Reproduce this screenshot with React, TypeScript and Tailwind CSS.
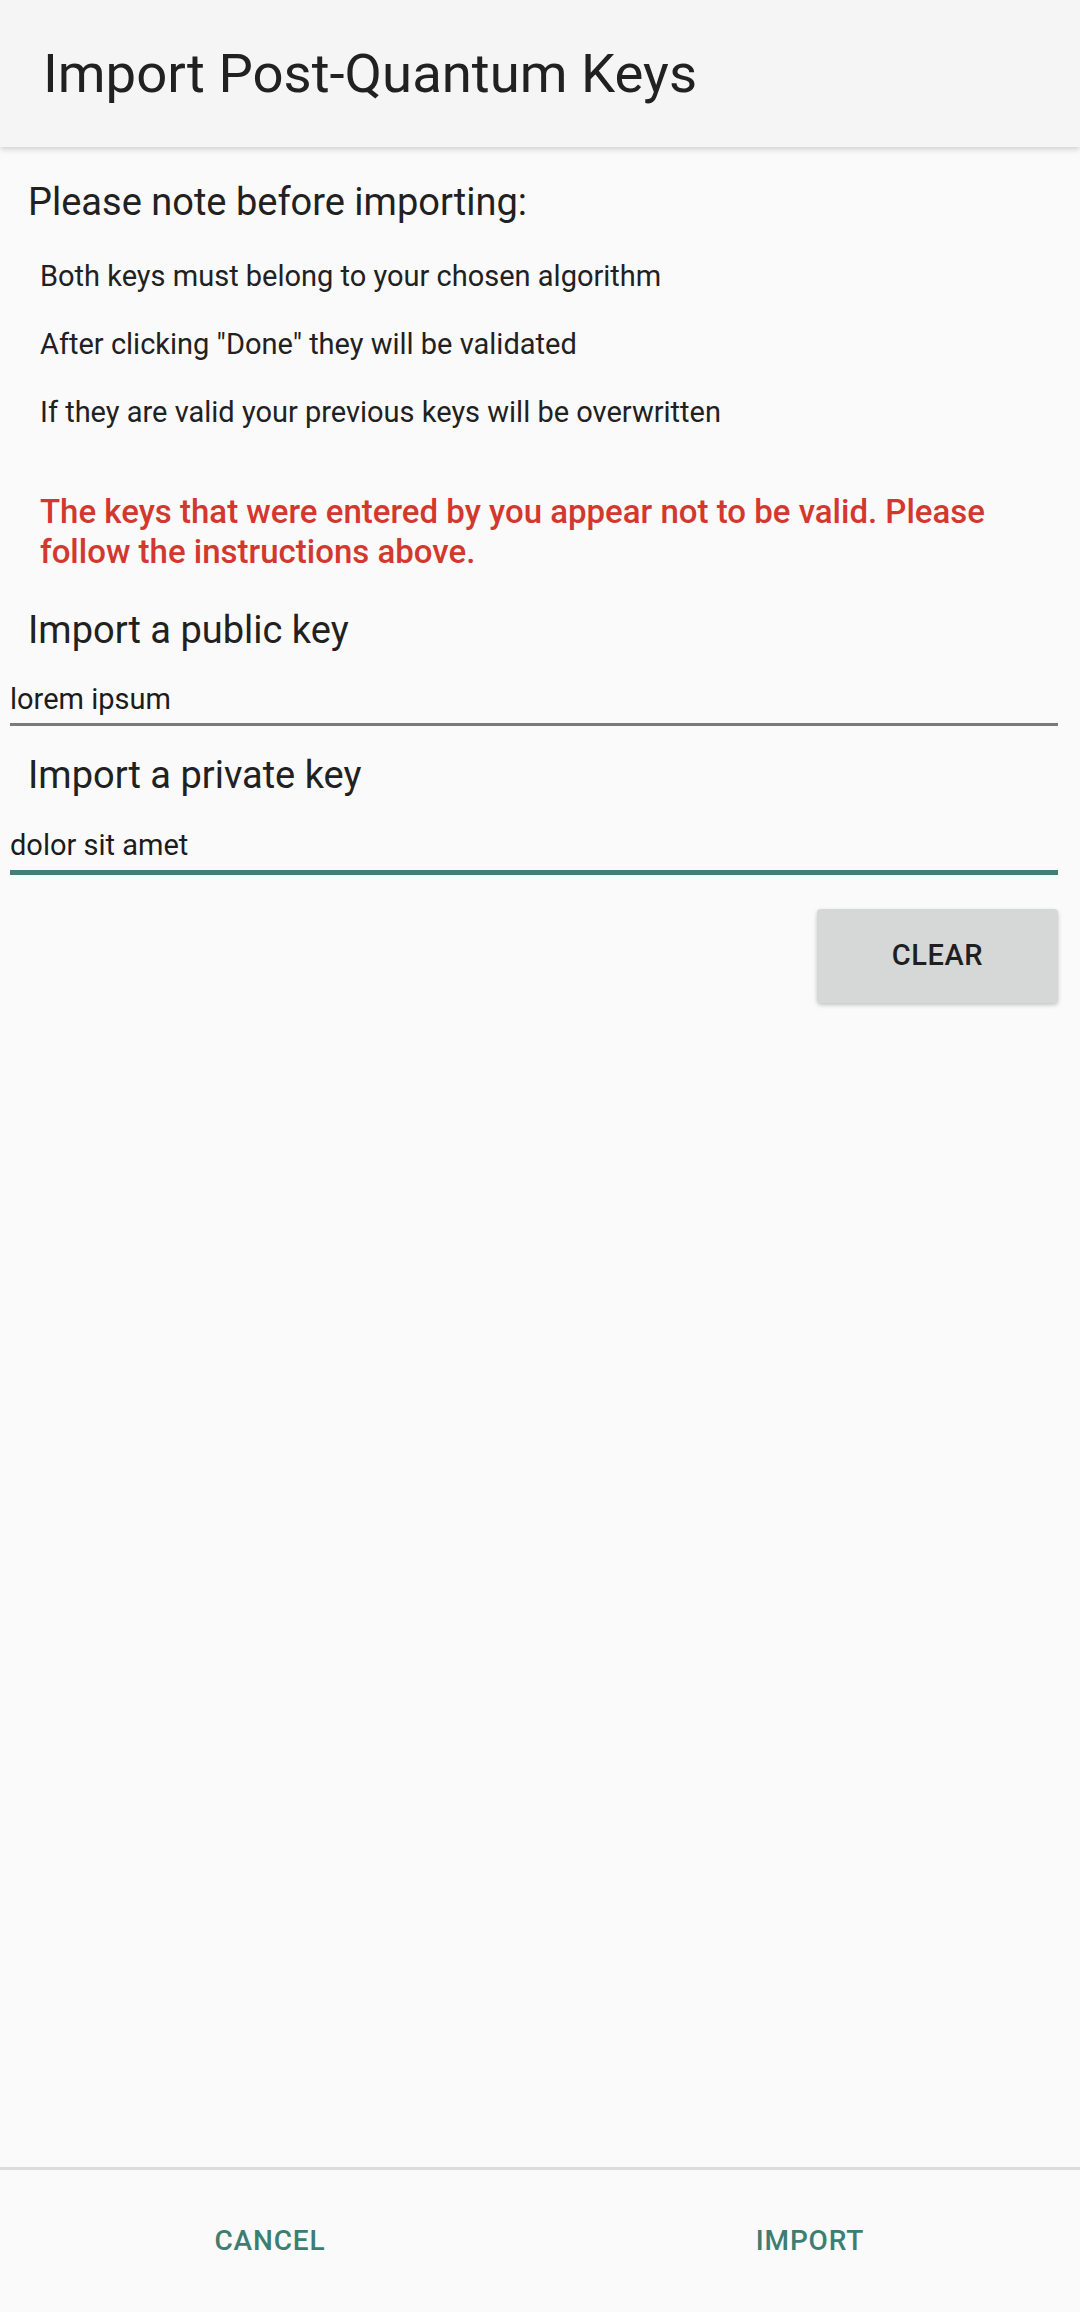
import { useState } from "react";

const notes = [
  "Both keys must belong to your chosen algorithm",
  'After clicking "Done" they will be validated',
  "If they are valid your previous keys will be overwritten",
];

function KeyInput({
  value,
  focused,
}: {
  value: string;
  focused?: boolean;
}) {
  return (
    <div
      className={
        focused
          ? "ml-[10px] mr-[22px] border-b-[5px] border-[#428076] pb-[5px]"
          : "ml-[10px] mr-[22px] border-b-[3px] border-[#7a7a7a] pb-[4px]"
      }
    >
      <p className="text-[29px] leading-[40px] text-[#1c1c1c]">{value}</p>
    </div>
  );
}

export default function App() {
  const [pub] = useState("lorem ipsum");
  const [priv] = useState("dolor sit amet");

  return (
    <div
      className="flex min-h-screen flex-col bg-[#fafafa]"
      style={{ fontFamily: "Roboto, 'Noto Sans', sans-serif" }}
    >
      <header className="flex h-[147px] items-center bg-[#f5f5f5] pl-[43px] shadow-[0_2px_6px_rgba(0,0,0,0.18)]">
        <h1 className="text-[54.5px] leading-none text-[#212121]">
          Import Post-Quantum Keys
        </h1>
      </header>

      <main className="flex-1">
        <h2 className="mt-[33px] pl-[28px] text-[38px] leading-[44px] text-[#212121]">
          Please note before importing:
        </h2>

        <div className="mt-[32px] flex flex-col gap-[28px] pl-[40px]">
          {notes.map((n) => (
            <p key={n} className="text-[29px] leading-[40px] text-[#212121]">
              {n}
            </p>
          ))}
        </div>

        {/* error shown after a failed validation */}
        <p className="mt-[60px] pl-[40px] pr-[40px] text-[33px] font-medium leading-[40px] text-[#d3382f]">
          The keys that were entered by you appear not to be valid. Please
          follow the instructions above.
        </p>

        <h2 className="mt-[36px] pl-[28px] text-[38px] leading-[44px] text-[#212121]">
          Import a public key
        </h2>
        <div className="mt-[27px]">
          <KeyInput value={pub} />
        </div>

        <h2 className="mt-[27px] pl-[28px] text-[38px] leading-[44px] text-[#212121]">
          Import a private key
        </h2>
        <div className="mt-[28px]">
          <KeyInput value={priv} focused />
        </div>

        <div className="mt-[34px] flex justify-end pr-[22px]">
          <button className="h-[94px] w-[241px] rounded-[4px] bg-[#d6d7d7] text-[29px] font-medium tracking-[0.02em] text-[#1f1f1f] shadow-[0_2px_4px_rgba(0,0,0,0.22)]">
            CLEAR
          </button>
        </div>
      </main>

      <footer className="flex h-[145px] border-t-[3px] border-[#dcdcdc] bg-[#fafafa]">
        <button className="flex-1 text-[28px] font-medium tracking-[0.03em] text-[#3e7d72]">
          CANCEL
        </button>
        <button className="flex-1 text-[28px] font-medium tracking-[0.03em] text-[#3e7d72]">
          IMPORT
        </button>
      </footer>
    </div>
  );
}
